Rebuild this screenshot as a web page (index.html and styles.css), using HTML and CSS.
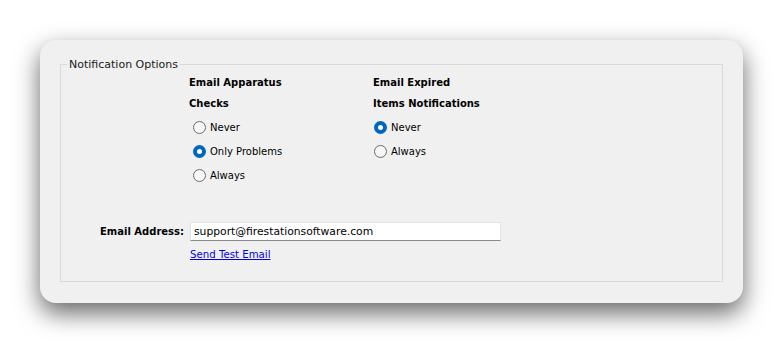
FILE: index.html
```html
<!DOCTYPE html>
<html lang="en">
<head>
    <meta charset="UTF-8">
    <meta name="viewport" content="width=device-width, initial-scale=1.0">
    <title>Notification Options</title>
    <link rel="stylesheet" href="styles.css">
</head>
<body>
    <div class="panel">
        <fieldset class="group">
            <legend>Notification Options</legend>

            <div class="options">
                <div class="spacer"></div>

                <div class="option-col first">
                    <div class="col-title">Email Apparatus</div>
                    <div class="col-title">Checks</div>
                    <label class="choice"><input type="radio" name="checks"> Never</label>
                    <label class="choice"><input type="radio" name="checks" checked> Only Problems</label>
                    <label class="choice"><input type="radio" name="checks"> Always</label>
                </div>

                <div class="option-col second">
                    <div class="col-title">Email Expired</div>
                    <div class="col-title">Items Notifications</div>
                    <label class="choice"><input type="radio" name="expired" checked> Never</label>
                    <label class="choice"><input type="radio" name="expired"> Always</label>
                </div>
            </div>

            <div class="email-row">
                <label class="email-label" for="email">Email Address:</label>
                <input class="email-input" id="email" type="text" value="support@firestationsoftware.com">
            </div>
            <div class="link-row">
                <a href="#" class="test-link">Send Test Email</a>
            </div>
        </fieldset>
    </div>
</body>
</html>
```

FILE: styles.css
```css
* {
    margin: 0;
    padding: 0;
    box-sizing: border-box;
}

body {
    font-family: 'DejaVu Sans', Verdana, sans-serif;
    font-size: 10px;
    color: #000;
    background: #fff;
    padding: 40px;
}

.panel {
    width: 703px;
    height: 263px;
    background: #f0f0f0;
    border-radius: 16px;
    box-shadow: 0 10px 24px rgba(0, 0, 0, 0.6);
    padding: 17px 20px 21px 20px;
    display: flex;
    flex-direction: column;
}

.group {
    flex: 1;
    border: 1px solid #d9d9d9;
    padding: 0;
    min-width: 0;
}

.group legend {
    margin-left: 6px;
    padding: 0 2px;
    font-size: 11px;
    line-height: 15px;
    color: #1a1a1a;
}

.options {
    display: flex;
}

.spacer {
    width: 128px;
}

.option-col {
    display: flex;
    flex-direction: column;
}

.option-col.first {
    width: 184px;
}

.col-title {
    font-weight: bold;
    height: 21px;
    line-height: 21px;
}

.col-title + .choice {
    margin-top: 1px;
}

.choice {
    display: flex;
    align-items: center;
    height: 24px;
    gap: 4px;
}

.first .choice {
    padding-left: 4px;
}

.second .choice {
    padding-left: 1px;
}

.choice input {
    appearance: none;
    width: 13px;
    height: 13px;
    border-radius: 50%;
    border: 1px solid #6b6b6b;
    background: #f6f6f6;
    flex-shrink: 0;
}

.choice input:checked {
    border: 4px solid #0067c0;
    background: #fff;
}

.email-row {
    display: flex;
    align-items: center;
    margin-top: 35px;
}

.email-label {
    width: 128px;
    text-align: right;
    padding-right: 5px;
    font-weight: bold;
}

.email-input {
    margin-left: 1px;
    width: 311px;
    height: 19px;
    border: 1px solid #e3e3e3;
    border-bottom: 1px solid #8a8a8a;
    background: #fff;
    font-family: inherit;
    font-size: 10.75px;
    padding: 0 3px;
    outline: none;
}

.link-row {
    padding-left: 129px;
    margin-top: 8px;
}

.test-link {
    font-size: 10.2px;
    color: #0000ee;
    text-decoration: underline;
}
```
